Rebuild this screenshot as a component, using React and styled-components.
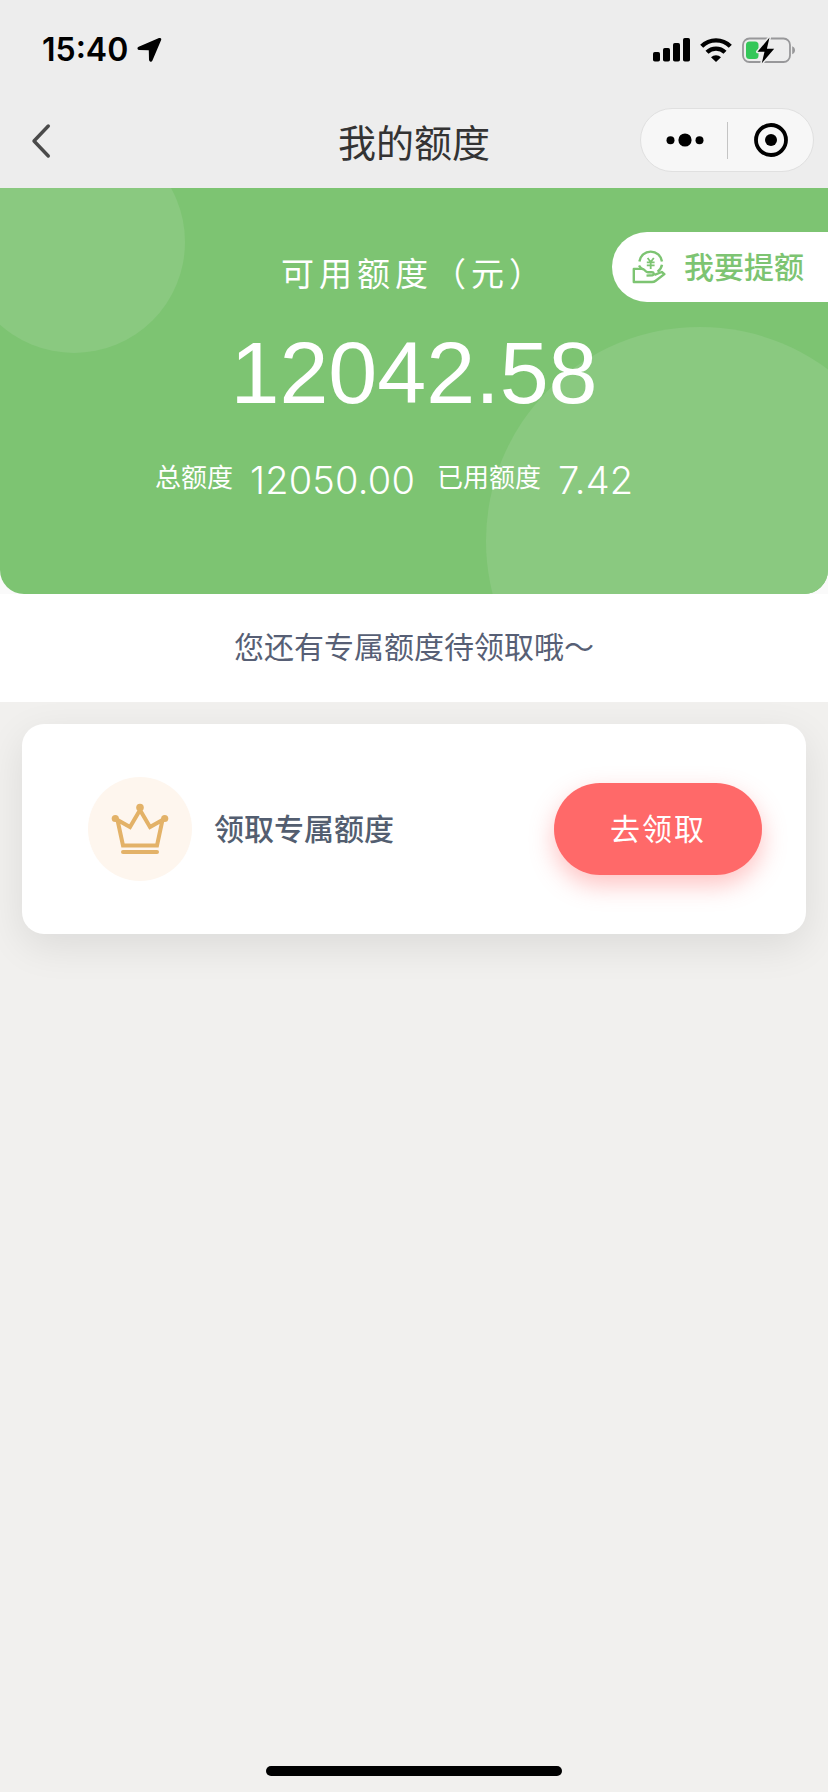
import React from 'react'
import styled, { createGlobalStyle } from 'styled-components'

const GlobalStyle = createGlobalStyle`
*{
  box-sizing:border-box;
}
body{
  margin:0;
  background-color:#f1f0ee;
  font-family:"Noto Sans CJK SC", sans-serif;
}
`
const Page = styled.div`
display:flex;
flex-direction:column;
width:100%;
height:1792px;
overflow:hidden;
background-color:#f1f0ee;
`
const Header = styled.header`
height:188px;
flex-shrink:0;
background-color:#ededed;
`
const StatusBar = styled.div`
display:flex;
align-items:center;
justify-content:space-between;
height:98px;
padding:1px 33px 0 42px;
`
const StatusGroup = styled.div`
display:flex;
align-items:center;
gap:${({ $gap }) => $gap}px;
`
const Time = styled.span`
padding-top:1px;
font-family:Inter, sans-serif;
font-size:32px;
font-weight:600;
line-height:40px;
color:#000;
`
const NavBar = styled.div`
display:grid;
grid-template-columns:1fr auto 1fr;
align-items:center;
height:90px;
padding:0 14px 5px;
`
const BackButton = styled.div`
display:flex;
padding-left:16px;
`
const Title = styled.h1`
margin:0;
font-size:38px;
font-weight:400;
line-height:56px;
color:#333;
`
const Capsule = styled.div`
display:flex;
align-items:center;
justify-self:end;
width:174px;
height:64px;
margin-bottom:1px;
border:1px solid #e0e0e0;
border-radius:32px;
background-color:#f7f7f7;
`
const CapsuleItem = styled.div`
display:flex;
flex:1;
align-items:center;
justify-content:center;
padding-left:2px;
`
const Divider = styled.div`
width:1px;
height:37px;
background-color:#c4c4c4;
`
const BannerWrap = styled.div`
flex-shrink:0;
background-color:#fafafa;
`
const Banner = styled.section`
position:relative;
display:flex;
flex-direction:column;
align-items:center;
height:406px;
overflow:hidden;
border-radius:0 0 24px 24px;
background-color:#7dc472;
color:#fff;
`
const Bubble = styled.div`
position:absolute;
left:${({ $x }) => $x}px;
top:${({ $y }) => $y}px;
width:${({ $size }) => $size}px;
height:${({ $size }) => $size}px;
border-radius:50%;
background-color:#8ac980;
`
const RaiseButton = styled.div`
position:absolute;
top:44px;
right:0;
display:flex;
align-items:center;
gap:18px;
width:216px;
height:70px;
padding-left:20px;
border-radius:35px 0 0 35px;
background-color:#fff;
color:#7dc472;
font-size:30px;
font-weight:500;
line-height:44px;
`
const RaiseText = styled.span`
margin-bottom:5px;
`
const BannerLabel = styled.div`
position:relative;
margin-top:60px;
font-size:33px;
line-height:48px;
letter-spacing:5px;
`
const Amount = styled.div`
position:relative;
margin-top:27px;
font-family:"Liberation Sans", Arial, sans-serif;
font-size:88px;
line-height:100px;
`
const Details = styled.div`
position:relative;
display:flex;
align-items:center;
align-self:flex-start;
margin:32px 0 0 155px;
height:50px;
`
const DetailLabel = styled.span`
width:${({ $width }) => $width}px;
margin-bottom:9px;
font-size:26px;
line-height:38px;
`
const DetailValue = styled.span`
width:${({ $width }) => $width}px;
font-family:Inter, sans-serif;
font-size:38px;
font-weight:350;
line-height:50px;
letter-spacing:0.2px;
`
const Notice = styled.div`
display:flex;
align-items:center;
justify-content:center;
flex-shrink:0;
height:108px;
padding-bottom:6px;
background-color:#fff;
font-size:30px;
color:#575f75;
`
const Card = styled.section`
display:flex;
align-items:center;
flex-shrink:0;
height:210px;
margin:22px 22px 0;
padding:0 44px 0 66px;
border-radius:22px;
background-color:#fff;
box-shadow:0 12px 40px rgba(0, 0, 0, 0.09);
`
const CrownBadge = styled.div`
display:flex;
align-items:center;
justify-content:center;
width:104px;
height:104px;
border-radius:50%;
background-color:#fef6ee;
`
const CardTitle = styled.div`
flex:1;
margin-left:22px;
padding-bottom:4px;
font-size:30px;
font-weight:500;
color:#535e70;
`
const ClaimButton = styled.button`
width:208px;
height:92px;
padding:0 0 4px;
border:none;
border-radius:46px;
background-color:#ff6969;
box-shadow:0 10px 24px rgba(255, 105, 105, 0.4);
color:#fff;
font-family:inherit;
font-size:30px;
letter-spacing:2px;
`
const HomeIndicator = styled.div`
align-self:center;
width:296px;
height:10px;
margin-top:auto;
margin-bottom:16px;
border-radius:5px;
background-color:#000;
`

const LocationIcon = () => (
    <svg width="25" height="25" viewBox="0 0 25 25">
        <path d="M22.300 1.800 2 10.500c-1.200.6-.9 1.700.3 1.700l9.300.3q1 0 1 1l.2 9.300c.1 1.300 1.400 1.500 1.900.3l8.700-20.400c.4-.8-.3-1.200-1.100-.9z" stroke="#000" strokeWidth="1.600" strokeLinejoin="round" />
    </svg>
)

const SignalIcon = () => (
    <svg width="37" height="24" viewBox="0 0 37 24">
        <rect x="0" y="14" width="7" height="9.500" rx="1.800" />
        <rect x="10" y="10" width="7" height="13.500" rx="1.800" />
        <rect x="20" y="5" width="7" height="18.500" rx="1.800" />
        <rect x="30" y="0" width="7" height="23.500" rx="1.800" />
    </svg>
)

const WifiIcon = () => (
    <svg width="32" height="24" viewBox="0 0 32 24" fill="none" stroke="#000" strokeWidth="4.300">
        <path d="M1.700 8.300a20.200 20.200 0 0 1 28.600 0" />
        <path d="M7 14.300a12.800 12.800 0 0 1 18 0" />
        <path d="M11 19.200a7.400 7.400 0 0 1 10 0L16 24z" fill="#000" stroke="none" />
    </svg>
)

const BatteryIcon = () => (
    <svg width="53" height="28" viewBox="0 0 53 28">
        <rect x="1" y="2.500" width="47" height="23.500" rx="6.500" fill="none" stroke="#98989a" strokeWidth="1.800" />
        <path d="M50.200 10.200c3.700 1.300 3.700 6.700 0 8z" fill="#98989a" />
        <rect x="4" y="5.500" width="12.500" height="17.500" rx="3.500" fill="#34c759" />
        <path d="M27.500 1.500 15.500 15.800h7l-2.700 11.400L32.200 12.700h-7.300z" fill="#000" stroke="#ededed" strokeWidth="3" strokeLinejoin="round" paintOrder="stroke" />
    </svg>
)

const BackIcon = () => (
    <svg width="22" height="36" viewBox="0 0 22 36" fill="none" stroke="#4a4a4a" strokeWidth="3.400" strokeLinecap="round" strokeLinejoin="round">
        <path d="M18.300 3 4 18l14.300 15" />
    </svg>
)

const MoreIcon = () => (
    <svg width="38" height="14" viewBox="0 0 38 14">
        <circle cx="4.500" cy="7.300" r="4" />
        <circle cx="19" cy="7" r="6.600" />
        <circle cx="33.500" cy="7.300" r="4" />
    </svg>
)

const TargetIcon = () => (
    <svg width="34" height="34" viewBox="0 0 34 34">
        <circle cx="17" cy="17" r="15" fill="none" stroke="#000" strokeWidth="3.800" />
        <circle cx="17" cy="17" r="6" />
    </svg>
)

const HandCoinIcon = () => (
    <svg width="34" height="34" viewBox="0 0 34 34" fill="none" stroke="#7dc472" strokeWidth="2.400" strokeLinejoin="round">
        <path d="M7.400 11.500a11.400 11.400 0 0 1 22.600 0M30 14.800a11.400 11.400 0 0 1-4.400 7" />
        <path d="m15.600 8 3.100 4 3.100-4M14.800 12.300h7.800M14.800 15.400h7.800M18.700 12v7" strokeWidth="1.800" />
        <path d="M7 15.500c1 1.800 2.300 3 4 4" />
        <path d="M22.500 24.800l7.300-2.800 2.600 2.100-8.700 6.600c-1 .8-2.300 1.300-3.700 1.300H1.800V18.900h8.400c2.500 0 3 3.300 5.500 3.300h4.300c2 0 2.600 2.700.4 3l-5.900.4" />
    </svg>
)

const CrownIcon = () => (
    <svg width="58" height="52" viewBox="0 0 58 52" fill="none" stroke="#e3b268" strokeWidth="4" strokeLinecap="round">
        <path d="M6.500 17 12 42.500h34L51.500 17 39 24 29 7 19 24z" />
        <path d="M12 49h34" />
        <g fill="#e3b268" stroke="none">
            <circle cx="29" cy="4.500" r="3.800" />
            <circle cx="4.300" cy="15.500" r="3.600" />
            <circle cx="53.700" cy="15.500" r="3.600" />
        </g>
    </svg>
)

const App = () => {
    return (
        <>
            <GlobalStyle />
            <Page>
                <Header>
                    <StatusBar>
                        <StatusGroup $gap={9}>
                            <Time>15:40</Time>
                            <LocationIcon />
                        </StatusGroup>
                        <StatusGroup $gap={10}>
                            <SignalIcon />
                            <WifiIcon />
                            <BatteryIcon />
                        </StatusGroup>
                    </StatusBar>
                    <NavBar>
                        <BackButton><BackIcon /></BackButton>
                        <Title>我的额度</Title>
                        <Capsule>
                            <CapsuleItem><MoreIcon /></CapsuleItem>
                            <Divider />
                            <CapsuleItem><TargetIcon /></CapsuleItem>
                        </Capsule>
                    </NavBar>
                </Header>
                <BannerWrap>
                    <Banner>
                        <Bubble $x={-37} $y={-57} $size={222} />
                        <Bubble $x={486} $y={139} $size={428} />
                        <BannerLabel>可用额度（元）</BannerLabel>
                        <Amount>12042.58</Amount>
                        <Details>
                            <DetailLabel $width={95}>总额度</DetailLabel>
                            <DetailValue $width={187}>12050.00</DetailValue>
                            <DetailLabel $width={121}>已用额度</DetailLabel>
                            <DetailValue $width={90}>7.42</DetailValue>
                        </Details>
                        <RaiseButton>
                            <HandCoinIcon />
                            <RaiseText>我要提额</RaiseText>
                        </RaiseButton>
                    </Banner>
                </BannerWrap>
                <Notice>您还有专属额度待领取哦～</Notice>
                <Card>
                    <CrownBadge><CrownIcon /></CrownBadge>
                    <CardTitle>领取专属额度</CardTitle>
                    <ClaimButton>去领取</ClaimButton>
                </Card>
                <HomeIndicator />
            </Page>
        </>
    )
}

export default App
